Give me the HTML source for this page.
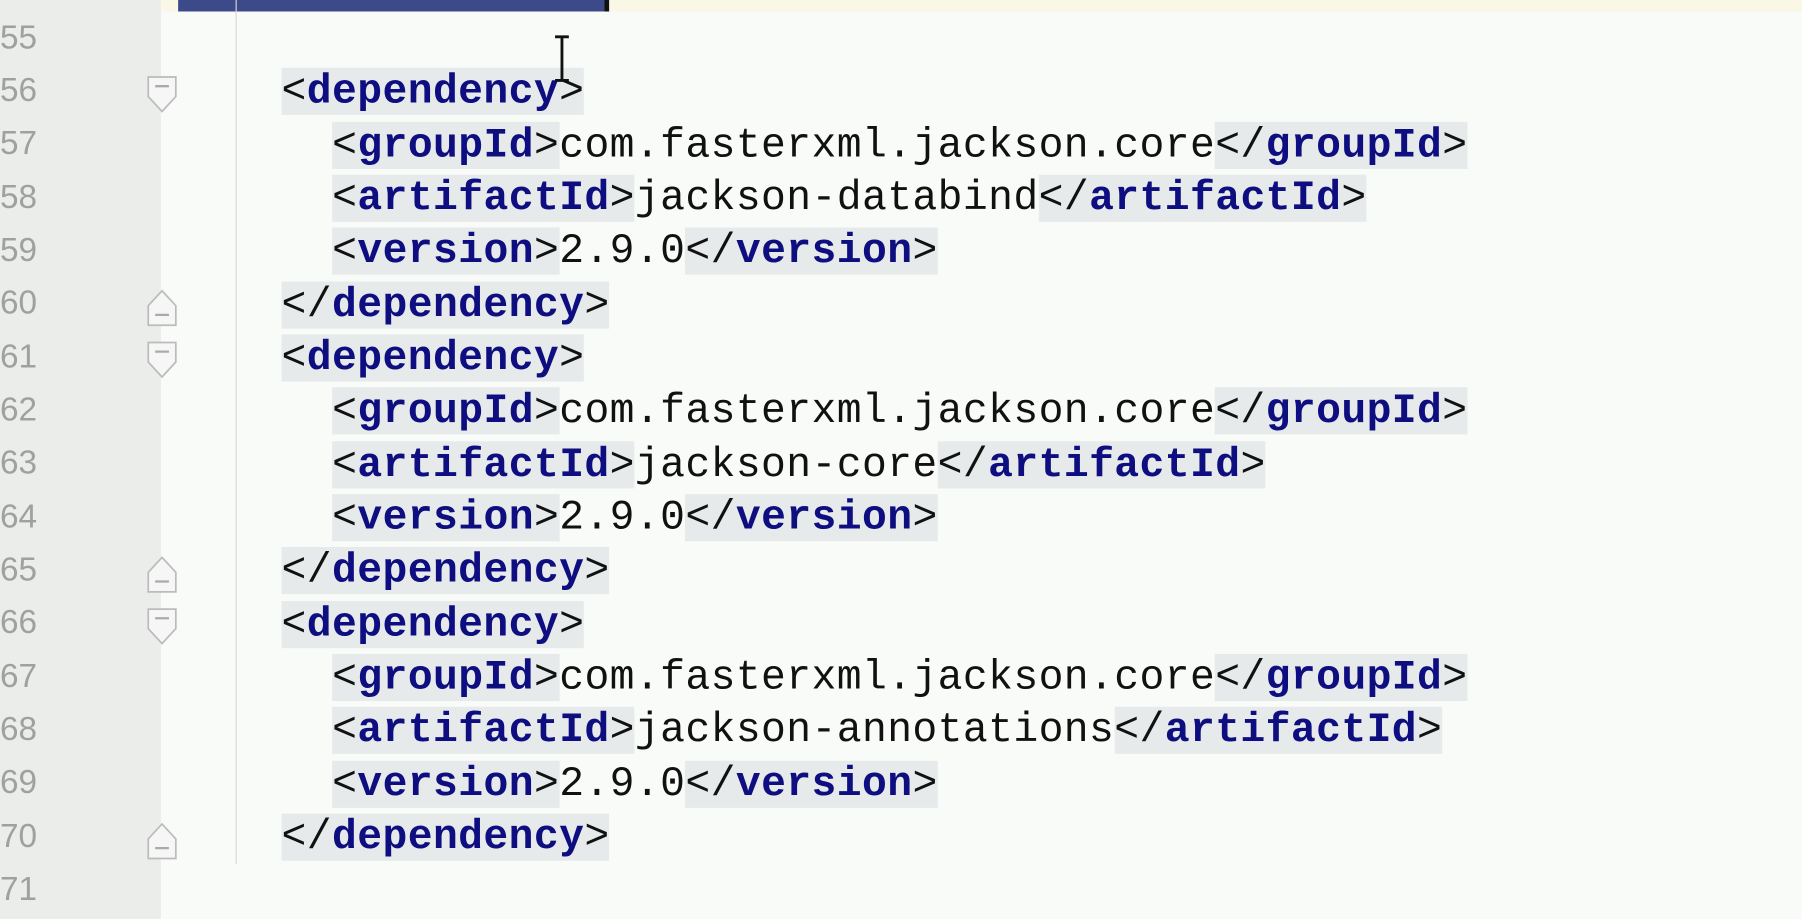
<!DOCTYPE html>
<html><head><meta charset="utf-8"><style>
html,body{margin:0;padding:0;width:1802px;height:884px;overflow:hidden;background:#f9fbf8;}
#w{position:absolute;left:0;top:0;width:1568px;height:800px;transform:scale(1.1492);transform-origin:0 0;background:#f9fbf8;}
#gut{position:absolute;left:0;top:0;width:140px;height:800px;background:#ebedeb;}
#top{position:absolute;left:140px;top:0;width:1428px;height:10px;background:#fbf7e6;}
#sel{position:absolute;left:155px;top:-30px;width:375px;height:40px;background:#3c4a8a;}
#selc{position:absolute;left:526px;top:-30px;width:4px;height:40px;background:#111;}
#vl{position:absolute;left:205px;top:0;width:1px;height:752px;background:#d6d8d6;}
.ln{position:absolute;left:0;width:40px;font:29px "Liberation Sans",sans-serif;color:#a0a0a0;}
.code{position:absolute;font:bold 36px "Liberation Mono",monospace;white-space:pre;height:46px;line-height:46px;letter-spacing:0.35px;}
.t{background:#e6eaea;color:#111;font-weight:normal;}
.t b{color:#0e0e80;}
.tx{color:#111;font-weight:normal;}
.fold{position:absolute;left:128px;}
</style></head><body><div id="w">
<div id="gut"></div><div id="top"></div><div id="sel"></div><div id="selc"></div><div id="vl"></div>
<div class="ln" style="top:17px">55</div>
<div class="ln" style="top:63px">56</div>
<div class="ln" style="top:109px">57</div>
<div class="ln" style="top:156px">58</div>
<div class="ln" style="top:202px">59</div>
<div class="ln" style="top:248px">60</div>
<div class="ln" style="top:295px">61</div>
<div class="ln" style="top:341px">62</div>
<div class="ln" style="top:387px">63</div>
<div class="ln" style="top:434px">64</div>
<div class="ln" style="top:480px">65</div>
<div class="ln" style="top:526px">66</div>
<div class="ln" style="top:573px">67</div>
<div class="ln" style="top:619px">68</div>
<div class="ln" style="top:665px">69</div>
<div class="ln" style="top:712px">70</div>
<div class="ln" style="top:758px">71</div>

<svg class="fold" style="top:66px" width="26" height="34"><path d="M1 1H25V18L13 31L1 18Z" fill="#f6f6f6" stroke="#bbb" stroke-width="1.5"/><path d="M7 9H19" stroke="#aaa" stroke-width="2"/></svg>
<svg class="fold" style="top:250px" width="26" height="34"><path d="M1 33H25V16L13 3L1 16Z" fill="#f6f6f6" stroke="#bbb" stroke-width="1.5"/><path d="M7 24H19" stroke="#aaa" stroke-width="2"/></svg>
<svg class="fold" style="top:297px" width="26" height="34"><path d="M1 1H25V18L13 31L1 18Z" fill="#f6f6f6" stroke="#bbb" stroke-width="1.5"/><path d="M7 9H19" stroke="#aaa" stroke-width="2"/></svg>
<svg class="fold" style="top:482px" width="26" height="34"><path d="M1 33H25V16L13 3L1 16Z" fill="#f6f6f6" stroke="#bbb" stroke-width="1.5"/><path d="M7 24H19" stroke="#aaa" stroke-width="2"/></svg>
<svg class="fold" style="top:529px" width="26" height="34"><path d="M1 1H25V18L13 31L1 18Z" fill="#f6f6f6" stroke="#bbb" stroke-width="1.5"/><path d="M7 9H19" stroke="#aaa" stroke-width="2"/></svg>
<svg class="fold" style="top:714px" width="26" height="34"><path d="M1 33H25V16L13 3L1 16Z" fill="#f6f6f6" stroke="#bbb" stroke-width="1.5"/><path d="M7 24H19" stroke="#aaa" stroke-width="2"/></svg>

<div class="code" style="left:245px;top:57px"><span class="t">&lt;<b>dependency</b>&gt;</span></div>
<div class="code" style="left:289px;top:104px"><span class="t">&lt;<b>groupId</b>&gt;</span><span class="tx">com.fasterxml.jackson.core</span><span class="t">&lt;/<b>groupId</b>&gt;</span></div>
<div class="code" style="left:289px;top:150px"><span class="t">&lt;<b>artifactId</b>&gt;</span><span class="tx">jackson-databind</span><span class="t">&lt;/<b>artifactId</b>&gt;</span></div>
<div class="code" style="left:289px;top:196px"><span class="t">&lt;<b>version</b>&gt;</span><span class="tx">2.9.0</span><span class="t">&lt;/<b>version</b>&gt;</span></div>
<div class="code" style="left:245px;top:243px"><span class="t">&lt;/<b>dependency</b>&gt;</span></div>
<div class="code" style="left:245px;top:289px"><span class="t">&lt;<b>dependency</b>&gt;</span></div>
<div class="code" style="left:289px;top:335px"><span class="t">&lt;<b>groupId</b>&gt;</span><span class="tx">com.fasterxml.jackson.core</span><span class="t">&lt;/<b>groupId</b>&gt;</span></div>
<div class="code" style="left:289px;top:382px"><span class="t">&lt;<b>artifactId</b>&gt;</span><span class="tx">jackson-core</span><span class="t">&lt;/<b>artifactId</b>&gt;</span></div>
<div class="code" style="left:289px;top:428px"><span class="t">&lt;<b>version</b>&gt;</span><span class="tx">2.9.0</span><span class="t">&lt;/<b>version</b>&gt;</span></div>
<div class="code" style="left:245px;top:474px"><span class="t">&lt;/<b>dependency</b>&gt;</span></div>
<div class="code" style="left:245px;top:521px"><span class="t">&lt;<b>dependency</b>&gt;</span></div>
<div class="code" style="left:289px;top:567px"><span class="t">&lt;<b>groupId</b>&gt;</span><span class="tx">com.fasterxml.jackson.core</span><span class="t">&lt;/<b>groupId</b>&gt;</span></div>
<div class="code" style="left:289px;top:613px"><span class="t">&lt;<b>artifactId</b>&gt;</span><span class="tx">jackson-annotations</span><span class="t">&lt;/<b>artifactId</b>&gt;</span></div>
<div class="code" style="left:289px;top:660px"><span class="t">&lt;<b>version</b>&gt;</span><span class="tx">2.9.0</span><span class="t">&lt;/<b>version</b>&gt;</span></div>
<div class="code" style="left:245px;top:706px"><span class="t">&lt;/<b>dependency</b>&gt;</span></div>

<svg style="position:absolute;left:480px;top:30px" width="18" height="42"><path d="M3 2H15M9 2V40M3 40H15" stroke="#111" stroke-width="2.5" fill="none"/></svg>
</div></body></html>
